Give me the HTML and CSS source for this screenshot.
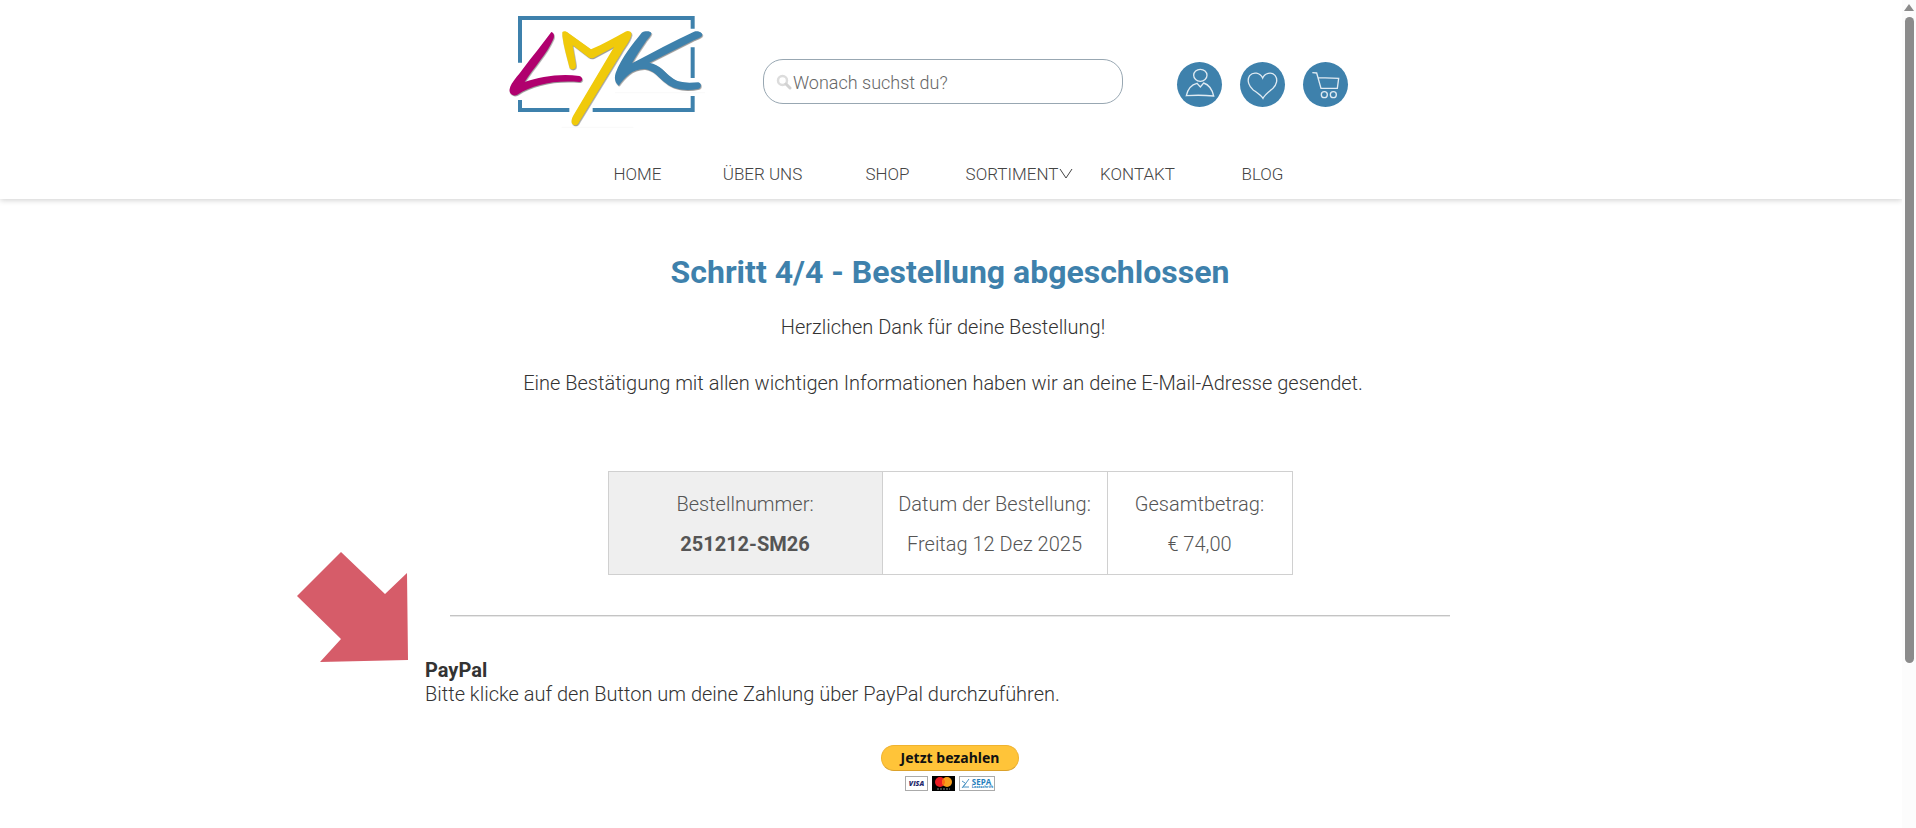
FILE: index.html
```
<!DOCTYPE html>
<html lang="de">
<head>
    <meta charset="UTF-8">
    <meta name="viewport" content="width=device-width, initial-scale=1.0">
    <title>Bestellung abgeschlossen - LMK</title>
    <link rel="stylesheet" href="styles.css">
</head>
<body>

<div class="page">
    <header class="header">
        <div class="header-top">
            <a href="#" class="logo" aria-label="LMK">
                <svg width="240" height="140" viewBox="0 0 720 420" fill="none">
                    <path d="M90 188V54H608V86M608 142V234M608 288V330H308M238 330H90V300" stroke="#3e81ac" stroke-width="12"/>
                    <path d="M215 382H430M375 278H645" stroke="#f6f6f6" stroke-width="2"/>
                    <g class="logo-letters">
                        <path d="M184 96C192 98 194 108 190 117C172 160 132 202 104 246C150 230 210 220 268 228C280 232 279 245 268 246C190 240 130 254 82 284C70 291 56 281 59 267C64 246 84 228 98 208C126 170 158 132 184 96Z" fill="#b0006e"/>
                        <path d="M217 96C221 92 229 93 234 98L303 148C340 132 374 112 406 95C416 90 427 96 424 106C420 124 404 142 394 160L268 365C264 377 252 379 247 372C241 364 247 350 254 340L372 141L312 173Q302 178 293 170L248 136L258 194C260 208 247 212 239 205C230 170 221 140 217 108Z" fill="#f0ca0b"/>
                        <path d="M455 98C463 93 481 92 484 99C484 107 473 116 467 125C453 146 438 167 426 190C490 157 552 122 612 95C624 91 637 97 637 105C633 115 617 117 607 123L478 188C510 194 526 218 544 232C568 252 600 248 625 247C635 249 635 263 626 266C592 274 554 271 528 250C506 234 492 210 464 207C426 206 406 232 386 257C375 248 372 235 377 219C394 172 430 130 455 98Z" fill="#3e81ac"/>
                    </g>
                </svg>
            </a>
            <form class="search">
                <svg class="search-icon" width="16" height="16" viewBox="0 0 32 32" fill="none">
                    <circle cx="13" cy="13" r="9" stroke="#dcdcdc" stroke-width="5"/>
                    <path d="M20 20L28 28" stroke="#d2d2d2" stroke-width="6" stroke-linecap="round"/>
                </svg>
                <input type="search" class="search-input" aria-label="Suche" placeholder="Wonach suchst du?">
            </form>
            <div class="user-links">
                <a href="#" class="round-link" aria-label="Mein Konto">
                    <svg width="45" height="45" viewBox="0 0 135 135">
                        <ellipse cx="70" cy="40" rx="20" ry="18"/>
                        <path d="M28 101C32 82 43 68 60 64L70 75L80 63C98 69 106 84 110 102Q70 98 28 101Z"/>
                    </svg>
                </a>
                <a href="#" class="round-link" aria-label="Merkliste">
                    <svg width="45" height="45" viewBox="0 0 135 135">
                        <path d="M68 48C60 32 40 28 29 41C19 56 28 74 39 83C50 91 61 97 69 109C75 96 89 88 99 79C109 69 115 53 105 40C94 28 74 33 68 48Z"/>
                    </svg>
                </a>
                <a href="#" class="round-link" aria-label="Warenkorb">
                    <svg width="45" height="45" viewBox="0 0 135 135">
                        <path d="M28 32L41 33L54 79H103L107 49L46 47"/>
                        <circle cx="64" cy="98" r="9"/>
                        <circle cx="91" cy="98" r="9"/>
                    </svg>
                </a>
            </div>
        </div>
        <nav class="nav">
            <a href="#">HOME</a>
            <a href="#">ÜBER UNS</a>
            <a href="#">SHOP</a>
            <a href="#" class="nav-dropdown">SORTIMENT
                <svg width="14" height="12" viewBox="0 0 14 12" fill="none" stroke="#444">
                    <path d="M1 1L7 10L13 1"/>
                </svg>
            </a>
            <a href="#">KONTAKT</a>
            <a href="#">BLOG</a>
        </nav>
    </header>

    <main class="content">
        <h1>Schritt 4/4 - Bestellung abgeschlossen</h1>
        <div class="message">
            <p>Herzlichen Dank für deine Bestellung!</p>
            <p>Eine Bestätigung mit allen wichtigen Informationen haben wir an deine E-Mail-Adresse gesendet.</p>
        </div>

        <table class="order">
            <thead>
                <tr>
                    <th class="order-number">Bestellnummer:</th>
                    <th class="order-date">Datum der Bestellung:</th>
                    <th>Gesamtbetrag:</th>
                </tr>
            </thead>
            <tbody>
                <tr>
                    <td class="order-number">251212-SM26</td>
                    <td>Freitag 12 Dez 2025</td>
                    <td>€ 74,00</td>
                </tr>
            </tbody>
        </table>

        <hr>

        <section class="payment">
            <svg class="arrow" width="112" height="112" viewBox="0 0 112 112">
                <path d="M44 1L88 43L110 22L111 109L23 111L44 88L0 45Z" fill="#d65c69"/>
            </svg>
            <h2>PayPal</h2>
            <p>Bitte klicke auf den Button um deine Zahlung über PayPal durchzuführen.</p>
        </section>

        <form class="paypal-form">
            <button type="button" class="paypal-button">Jetzt bezahlen</button>
            <div class="cards">
                <span class="card visa">VISA</span>
                <span class="card mastercard">
                    <svg width="23" height="15" viewBox="0 0 46 30">
                        <circle cx="16" cy="12" r="10" fill="#eb1c24"/>
                        <circle cx="30" cy="12" r="10" fill="#f79e1b"/>
                        <path d="M23 5Q17 12 23 19Q29 12 23 5Z" fill="#ff6b13"/>
                        <path d="M10 26H36" stroke="#888" stroke-width="2" stroke-dasharray="4 2"/>
                    </svg>
                </span>
                <span class="card sepa">
                    <svg width="9" height="11" viewBox="0 0 9 11" fill="none" stroke="#4b93c3">
                        <path d="M1 3L4 5M8 1L2 9H8M1 10L5 5"/>
                    </svg>
                    <span class="sepa-text">SEPA<small>Lastschrift</small></span>
                </span>
            </div>
        </form>
    </main>
</div>

<div class="scrollbar">
    <div class="scroll-up"></div>
    <div class="scroll-thumb"></div>
</div>

</body>
</html>
```
FILE: styles.css
```
* {
    box-sizing: border-box;
}
body {
    display: flex;
    min-height: 100vh;
    margin: 0;
    background-color: #fff;
    color: #333;
    font-family: Roboto, "Open Sans", sans-serif;
    font-size: 20px;
    font-weight: 300;
}
a {
    color: inherit;
    text-decoration: none;
}
.page {
    flex: 1;
}

/* Kopfbereich */
.header {
    padding-right: 2px;
    box-shadow: 0 1px 6px rgba(0, 0, 0, 0.2);
}
.header-top {
    display: flex;
    align-items: flex-start;
    max-width: 920px;
    height: 140px;
    margin: 0 auto;
}
.logo svg {
    display: block;
}
.logo-letters {
    filter: drop-shadow(2px 3px 1px rgba(0, 0, 0, 0.4));
}
.search {
    display: flex;
    align-items: center;
    width: 360px;
    height: 45px;
    margin: 59px 54px 0 33px;
    padding: 0 12px;
    border: 1px solid #98a7b2;
    border-radius: 20px;
}
.search-input {
    flex: 1;
    padding: 2px 0 0 1px;
    border: none;
    outline: none;
    background: none;
    font: inherit;
    font-size: 18px;
}
.search-input::placeholder {
    color: #666;
}
.user-links {
    display: flex;
    gap: 18px;
    margin-top: 62px;
}
.round-link {
    width: 45px;
    height: 45px;
    border-radius: 50%;
    background-color: #3e81ac;
}
.round-link svg {
    display: block;
    fill: none;
    stroke: #dfeaf2;
    stroke-width: 4;
}
.nav {
    display: grid;
    grid-template-columns: repeat(6, 1fr);
    max-width: 750px;
    margin: 0 auto;
    padding: 22px 0 13px;
    color: #444;
    font-size: 17px;
    line-height: 24px;
    text-align: center;
}
.nav-dropdown {
    display: flex;
    align-items: center;
    justify-content: center;
    gap: 1px;
    padding-left: 14px;
}

/* Inhalt */
.content {
    max-width: 1052px;
    margin: 0 auto;
    padding: 52px 2px 34px 0;
}
h1 {
    margin: 0 0 20px;
    color: #3e81ac;
    font-size: 32px;
    font-weight: 700;
    line-height: 42px;
    text-align: center;
}
.message {
    padding-right: 14px;
    line-height: 28px;
    text-align: center;
}
.message p {
    margin: 0 0 28px;
}
.order {
    width: 685px;
    margin: 74px auto 40px;
    border: 1px solid #d0d0d0;
    border-collapse: collapse;
    color: #555;
    line-height: 24px;
    text-align: center;
}
.order th,
.order td {
    padding: 8px 0 18px;
    border-right: 1px solid #d0d0d0;
    font-weight: 300;
}
.order th {
    padding: 20px 0 8px;
}
.order .order-number {
    width: 274px;
    background-color: #efefef;
}
.order td.order-number {
    font-weight: 700;
}
.order-date {
    width: 225px;
}
hr {
    max-width: 1000px;
    height: 2px;
    margin: 0 auto 41px;
    border: none;
    border-top: 1px solid #c4c4c4;
    background-color: #e8e8e8;
}
.payment {
    position: relative;
    margin-bottom: 39px;
    line-height: 24px;
}
.payment h2 {
    margin: 0;
    font-size: 20px;
    font-weight: 700;
}
.payment p {
    margin: 0;
}
.arrow {
    position: absolute;
    right: 100%;
    bottom: 43px;
    margin-right: 16px;
}

/* PayPal */
.paypal-form {
    display: flex;
    flex-direction: column;
    align-items: center;
    gap: 5px;
}
.paypal-button {
    width: 138px;
    height: 26px;
    padding: 0;
    border: 1px solid #f0b32f;
    border-bottom-color: #dba12b;
    border-radius: 13px;
    background-color: #ffc439;
    color: #111;
    font-family: "Noto Sans", sans-serif;
    font-size: 14px;
    font-weight: 700;
    line-height: 22px;
    cursor: pointer;
}
.cards {
    display: flex;
    gap: 4px;
}
.card {
    display: flex;
    align-items: center;
    justify-content: center;
    width: 23px;
    height: 15px;
    border: 1px solid #aaa;
    background-color: #fff;
    font-family: "Open Sans", sans-serif;
    line-height: 7px;
}
.visa {
    color: #1f2a6b;
    font-size: 7px;
    font-style: italic;
    font-weight: 800;
}
.mastercard {
    border: none;
    background-color: #000;
}
.sepa {
    gap: 2px;
    width: 36px;
    color: #2580bd;
    font-size: 8px;
    font-weight: 700;
}
.sepa-text {
    display: flex;
    flex-direction: column;
}
.sepa-text small {
    font-size: 4px;
    line-height: 4px;
}

/* Bildlaufleiste */
.scrollbar {
    display: flex;
    flex-direction: column;
    align-items: center;
    gap: 6px;
    width: 14px;
    padding-top: 4px;
    background-color: #fcfcfc;
}
.scroll-up {
    border: 5px solid transparent;
    border-top: none;
    border-bottom: 7px solid #8b8b8b;
}
.scroll-thumb {
    width: 9px;
    height: 78vh;
    border-radius: 5px;
    background-color: #8b8b8b;
}
```
